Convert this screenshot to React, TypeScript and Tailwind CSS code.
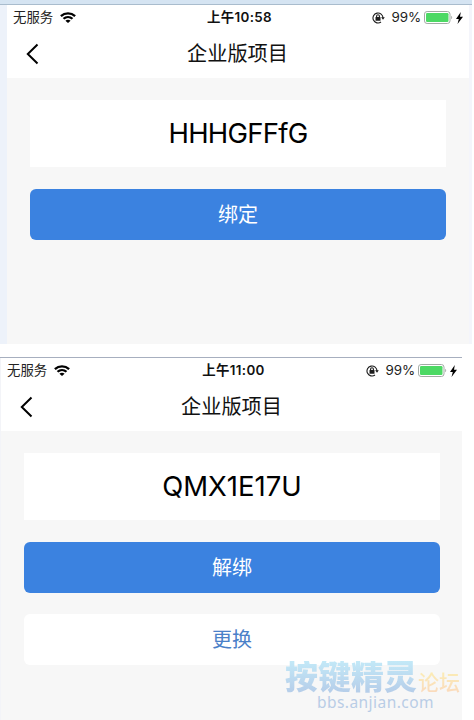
import type { ReactNode } from 'react';

type PhoneScreenProps = {
  time: string;
  code: ReactNode;
  children: ReactNode;
};

const title = '企业版项目';

const WifiIcon = () => (
  <svg width="16" height="11" viewBox="0 0 16 12" preserveAspectRatio="none" fill="none" stroke="#000" strokeWidth="2.3">
    <path d="M.9 4.5C5 .5 11 .5 15.1 4.5" />
    <path d="M3.5 7.4c2.6-2.4 6.4-2.4 9 0" />
    <path d="M8 12 5.4 9.5c1.4-1.3 3.8-1.3 5.2 0z" fill="#000" stroke="none" />
  </svg>
);

const RotationLockIcon = () => (
  <svg width="13" height="12" viewBox="0 0 13 12" fill="none" stroke="#1c1c1c">
    <path d="M9 10A5 5 0 1 1 11 6" strokeWidth="1.1" />
    <path d="M9.1 5.2h3.7L11 7.8z" fill="#1c1c1c" stroke="none" />
    <path d="M4.6 5.4V4.1a1.4 1.4 0 0 1 2.8 0v1.3" strokeWidth="1.1" />
    <rect x="3.5" y="5" width="5" height="3.8" rx=".5" fill="#1c1c1c" stroke="none" />
  </svg>
);

const BatteryIcon = () => (
  <svg width="29" height="13" viewBox="0 0 29 13" fill="none">
    <rect x=".5" y=".5" width="25.5" height="12" rx="2.6" stroke="#a3aaa5" />
    <rect x="2" y="2" width="22.5" height="9" rx="1.2" fill="#4cd964" />
    <path d="M27.2 4.8c1.3.4 1.3 3 0 3.4z" fill="#a3aaa5" />
  </svg>
);

const BoltIcon = () => (
  <svg width="7" height="12" viewBox="0 0 7 12">
    <path d="M4.8 0 0 6.9h2.8L1.5 12 7 4.8H4z" fill="#000" />
  </svg>
);

const PhoneScreen = ({ time, code, children }: PhoneScreenProps) => (
  <div className="flex h-full w-[462px] flex-col bg-[#f7f7f7]">
    <header className="h-[73px] shrink-0 bg-white">
      <div className="grid h-[25px] grid-cols-[1fr_auto_1fr] items-center pl-1.5 pr-[6px] text-[13.4px] leading-none text-[#222]">
        <div className="flex items-center gap-[7px]">
          <span>无服务</span>
          <WifiIcon />
        </div>
        <span className="pl-[3px] text-[13.4px] font-semibold tracking-[0.35px] text-[#111]">{time}</span>
        <div className="flex items-center justify-end">
          <RotationLockIcon />
          <span className="ml-[7px] mr-[3px] text-[13.4px] tracking-[-0.1px]">99%</span>
          <BatteryIcon />
          <span className="ml-[3px]">
            <BoltIcon />
          </span>
        </div>
      </div>
      <nav className="grid h-[48px] grid-cols-[1fr_auto_1fr] items-center pr-px">
        <svg className="ml-[19px]" width="13" height="22" viewBox="0 0 13 22" fill="none" stroke="#000" strokeWidth="2">
          <path d="M11.5 1.5 1.8 11l9.7 9.5" />
        </svg>
        <h1 className="text-[20.2px] leading-none text-[#111]">{title}</h1>
      </nav>
    </header>
    <main className="ml-[23px] flex w-[416px] flex-col pt-[22px]">
      <div className="flex h-[67px] items-center justify-center bg-white text-[27.5px] leading-none text-black">
        {code}
      </div>
      {children}
    </main>
  </div>
);

const App = () => (
  <div className="relative h-[720px] w-[474px] overflow-hidden bg-white font-['Inter','Noto_Sans_CJK_SC',sans-serif]">
    <section className="h-[344px] w-[472px] bg-[#f4f5fb]">
      <div className="h-[5px] border-b border-[#a9bccd] bg-[#d5e4f2]" />
      <div className="flex h-[339px] border-l-[7px] border-[#edf2fa]">
        <PhoneScreen time="上午10:58" code={<span className="tracking-[-0.75px]">HHHGFFfG</span>}>
          <button className="mt-[22px] h-[51px] rounded-md bg-[#3b82e0] text-[20px] leading-none text-white">绑定</button>
        </PhoneScreen>
      </div>
    </section>

    <section className="mt-[13px] h-[363px] w-[462px] overflow-hidden">
      <div className="h-px bg-[#a7afbf]" />
      <div className="h-[362px] border-l border-[#f3f4f8]">
        <PhoneScreen time="上午11:00" code={<span>QMX1E17U</span>}>
          <button className="mt-[22px] h-[51px] rounded-md bg-[#3b82e0] text-[20px] leading-none text-white">解绑</button>
          <button className="mt-[21px] h-[51px] rounded-md bg-white text-[20px] leading-none text-[#4a80c8]">更换</button>
        </PhoneScreen>
      </div>
    </section>

    {/* forum watermark */}
    <div className="absolute left-[285px] top-[661px] w-[180px]">
      <div className="flex items-end leading-none">
        <span className="bg-linear-to-b from-[#c3e9f8] to-[#b5cce8] bg-clip-text text-[33px] font-black text-transparent">
          按键精灵
        </span>
        <span className="ml-px bg-linear-to-b from-[#fbecb5] to-[#fad9bd] bg-clip-text pb-px text-[21px] font-medium text-transparent">
          论坛
        </span>
      </div>
      <div className="ml-8 mt-px font-['Noto_Sans',sans-serif] text-[15.5px] leading-none tracking-[0.45px] text-[#b9cde6]">
        bbs.anjian.com
      </div>
    </div>
  </div>
);

export default App;
